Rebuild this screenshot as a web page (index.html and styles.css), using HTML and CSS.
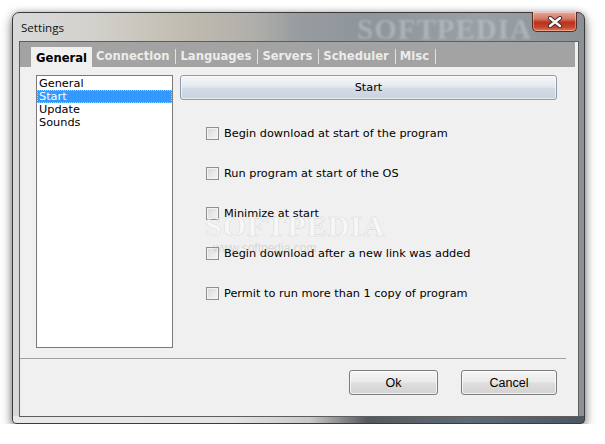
FILE: index.html
```html
<!DOCTYPE html>
<html>
<head>
<meta charset="utf-8">
<title>Settings</title>
<link rel="stylesheet" href="styles.css">
</head>
<body>
<div class="window">
  <div class="titlebar">
    <span class="title">Settings</span>
    <span class="wm-title">SOFTPEDIA</span>
  </div>
  <div class="close">
    <svg width="16" height="12" viewBox="0 0 16 12">
      <path d="M3 2 L13 10 M13 2 L3 10" stroke="#3a2a28" stroke-width="4.2" stroke-linecap="round" fill="none"/>
      <path d="M3 2 L13 10 M13 2 L3 10" stroke="#ffffff" stroke-width="2.4" stroke-linecap="round" fill="none"/>
    </svg>
  </div>
  <div class="client">
    <div class="tabs">
      <div class="tab active">General</div>
      <div class="tab">Connection</div>
      <div class="tab">Languages</div>
      <div class="tab">Servers</div>
      <div class="tab">Scheduler</div>
      <div class="tab">Misc</div>
    </div>
    <div class="body">
      <ul class="list">
        <li class="item">General</li>
        <li class="item selected">Start</li>
        <li class="item">Update</li>
        <li class="item">Sounds</li>
      </ul>
      <div class="panel">
        <div class="start-btn">Start</div>
        <div class="options">
          <div class="opt"><span class="cb"></span><span>Begin download at start of the program</span></div>
          <div class="opt"><span class="cb"></span><span>Run program at start of the OS</span></div>
          <div class="opt"><span class="cb"></span><span>Minimize at start</span></div>
          <div class="opt"><span class="cb"></span><span>Begin download after a new link was added</span></div>
          <div class="opt"><span class="cb"></span><span>Permit to run more than 1 copy of program</span></div>
        </div>
      </div>
    </div>
    <div class="sep"></div>
    <div class="footer">
      <div class="btn btn-ok">Ok</div>
      <div class="btn btn-cancel">Cancel</div>
    </div>
  </div>
  <div class="watermark">
    <span class="wm-big">SOFTPEDIA</span>
    <span class="wm-small">www.softpedia.com</span>
  </div>
</div>
</body>
</html>
```

FILE: styles.css
```css
* { box-sizing: border-box; }

html, body {
  margin: 0;
  padding: 0;
  background: #ffffff;
}

body {
  font-family: "DejaVu Sans", sans-serif;
  font-size: 11.3px;
  color: #000;
}

.window {
  position: relative;
  margin: 12px 0 0 12px;
  width: 573px;
  height: 412px;
  border: 1px solid #3b3b3b;
  border-radius: 7px 7px 4px 4px;
  padding: 0 5px 6px 6px;
  display: flex;
  flex-direction: column;
  background:
    linear-gradient(to right, #e9e9e9 0%, #e4e4e4 38%, #c9c9c9 52%, #55595e 62%, #5f6b75 80%, #4b5660 100%) bottom / 100% 7px no-repeat,
    linear-gradient(to right, #d9d9d9 0%, #d3d1cc 14%, #c1bcb1 30%, #b1afaa 42%, #979ca0 50%, #8e959b 62%, #9aa0a5 82%, #8a9096 100%);
  box-shadow: 0 5px 12px rgba(0,0,0,0.45), 0 0 6px rgba(0,0,0,0.25);
}

.titlebar {
  position: relative;
  height: 28px;
  display: flex;
  align-items: center;
  padding-left: 2px;
}

.title {
  font-family: "Open Sans", "DejaVu Sans", sans-serif;
  font-size: 11.6px;
  color: #111;
}

.wm-title {
  position: absolute;
  left: 338px;
  top: 0;
  font-family: "Liberation Serif", serif;
  font-weight: bold;
  font-size: 29px;
  letter-spacing: 1px;
  color: rgba(200, 205, 210, 0.5);
  filter: blur(1.2px);
}

.close {
  position: absolute;
  top: -1px;
  right: 7px;
  width: 45px;
  height: 20px;
  border: 1px solid #5a2a24;
  border-top: none;
  border-radius: 0 0 5px 5px;
  background: linear-gradient(to bottom, #e6a898 0%, #d47a66 35%, #b8321e 55%, #c8452c 80%, #e07a5a 100%);
  display: flex;
  align-items: center;
  justify-content: center;
  box-shadow: inset 0 0 0 1px rgba(255,255,255,0.35);
}

.client {
  flex: 1;
  border: 1px solid #5e5e5e;
  background: #f0f0f0;
  display: flex;
  flex-direction: column;
}

.tabs {
  height: 25px;
  margin-right: 3px;
  background: #a3a3a3;
  display: flex;
  align-items: flex-end;
  padding-left: 11px;
  font-size: 11.6px;
}

.tab {
  font-weight: bold;
  color: #ececec;
  height: 15px;
  line-height: 15px;
  margin-bottom: 3px;
  padding: 0 6px 0 4px;
  border-right: 1px solid #e2e2e2;
  white-space: nowrap;
}

.tab.active {
  color: #000;
  background: #f0f0f0;
  height: 20px;
  margin-bottom: 0;
  padding: 4px 5px 0 5px;
  border-right: none;
}

.body {
  flex: 1;
  display: flex;
  padding: 8px 21px 10px 16px;
  gap: 7px;
}

.list {
  list-style: none;
  margin: 0;
  padding: 1px 0 0 0;
  width: 137px;
  height: 273px;
  border: 1px solid #7a7a7a;
  background: #fff;
}

.item {
  height: 13px;
  line-height: 13px;
  padding-left: 2px;
  white-space: nowrap;
}

.item.selected {
  background: #3399ff;
  color: #fff;
  outline: 1px dotted #a9d2ff;
  outline-offset: -1px;
}

.panel {
  flex: 1;
  display: flex;
  flex-direction: column;
}

.start-btn {
  height: 25px;
  border: 1px solid #8f9aa8;
  border-radius: 3px;
  background: linear-gradient(to bottom, #f5f7fa 0%, #e4e9f0 45%, #d3dbe6 55%, #c8d2df 100%);
  box-shadow: inset 0 0 0 1px rgba(255,255,255,0.6);
  display: flex;
  align-items: center;
  justify-content: center;
}

.options {
  display: flex;
  flex-direction: column;
  gap: 27px;
  padding: 27px 0 0 26px;
}

.opt {
  height: 13px;
  display: flex;
  align-items: center;
  gap: 5px;
  white-space: nowrap;
}

.cb {
  flex: none;
  width: 13px;
  height: 13px;
  border: 1px solid #8e8f8f;
  background: linear-gradient(135deg, #d6d8db 0%, #e6e7e9 50%, #f7f7f7 100%);
  box-shadow: inset 0 0 0 1px #f3f3f3;
}

.sep {
  height: 1px;
  margin-right: 12px;
  background: #a0a0a0;
}

.footer {
  display: flex;
  justify-content: flex-end;
  gap: 23px;
  padding: 11px 21px 21px 0;
}

.btn {
  height: 25px;
  border: 1px solid #7c7c7c;
  border-radius: 3px;
  background: linear-gradient(to bottom, #f4f4f4 0%, #ebebeb 45%, #dddddd 55%, #d2d2d2 100%);
  box-shadow: inset 0 0 0 1px rgba(255,255,255,0.7);
  font-family: "Liberation Sans", sans-serif;
  font-size: 12.5px;
  display: flex;
  align-items: center;
  justify-content: center;
}

.btn-ok { width: 89px; }
.btn-cancel { width: 96px; }

.watermark {
  position: absolute;
  left: 192px;
  top: 198px;
  display: flex;
  flex-direction: column;
  pointer-events: none;
}

.wm-big {
  font-family: "Liberation Serif", serif;
  font-weight: bold;
  font-size: 30px;
  line-height: 30px;
  letter-spacing: 1px;
  color: rgba(255,255,255,0.5);
  -webkit-text-stroke: 0.6px rgba(170,170,170,0.35);
}

.wm-small {
  font-family: "Liberation Sans", sans-serif;
  font-size: 12px;
  line-height: 14px;
  margin-left: 8px;
  color: rgba(150,150,150,0.3);
}
```
